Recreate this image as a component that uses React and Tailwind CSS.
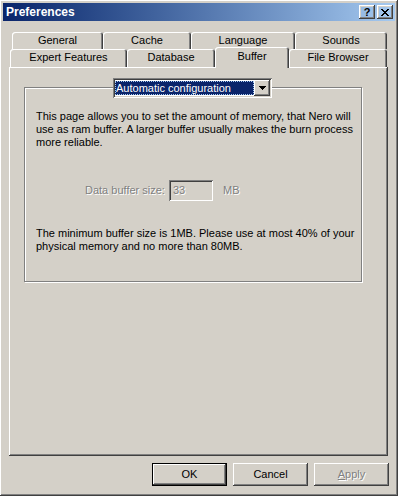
import React from 'react';

const raised = 'shadow-[inset_-1px_-1px_#404040,inset_1px_1px_#fff,inset_-2px_-2px_#808080,inset_2px_2px_#d4d0c8]';
const sunken = 'shadow-[inset_1px_1px_#808080,inset_-1px_-1px_#fff,inset_2px_2px_#404040,inset_-2px_-2px_#d4d0c8]';
const tabEdge = 'rounded-t-[3px] shadow-[inset_1px_1px_#fff,inset_-1px_0_#404040,inset_-2px_0_#808080]';
const disabled = 'text-[#808080] [text-shadow:1px_1px_0_#fff]';

const Tab = ({ label, w, active }) => (
  <div
    className={`${w} ${tabEdge} bg-[#d4d0c8] flex justify-center ${
      active ? 'relative z-10 -mt-[2px] h-[21px] pt-[3px]' : 'h-full pt-[2px]'
    }`}
  >
    {label}
  </div>
);

const Button = ({ children, isDefault, off }) => (
  <div
    className={`w-[75px] h-[23px] flex items-center justify-center bg-[#d4d0c8] ${
      isDefault
        ? 'border border-black shadow-[inset_-1px_-1px_#404040,inset_1px_1px_#fff,inset_-2px_-2px_#808080]'
        : raised
    } ${off ? disabled : 'text-black'}`}
  >
    {children}
  </div>
);

const CloseGlyph = () => (
  <svg width="8" height="7" viewBox="0 0 8 7" shapeRendering="crispEdges">
    <path d="M0 0h2v1H0zM6 0h2v1H6zM1 1h2v1H1zM5 1h2v1H5zM2 2h4v1H2zM3 3h2v1H3zM2 4h4v1H2zM1 5h2v1H1zM5 5h2v1H5zM0 6h2v1H0zM6 6h2v1H6z" fill="#000" />
  </svg>
);

export default function App() {
  return (
    <div className={`w-[398px] h-[496px] bg-[#d4d0c8] p-[3px] flex flex-col font-['Liberation_Sans',Arial,sans-serif] text-[11px] leading-[13px] text-black ${raised}`}>
      {/* title bar */}
      <div className="h-[18px] flex items-center bg-linear-to-r from-[#0a246a] to-[#a6caf0] pl-[3px] pr-[2px]">
        <span className="font-bold text-white text-[12px] flex-1">Preferences</span>
        <div className="flex gap-[2px]">
          <div className={`w-[16px] h-[14px] flex items-center justify-center font-bold text-[11px] leading-none ${raised}`}>?</div>
          <div className={`w-[16px] h-[14px] flex items-center justify-center ${raised}`}>
            <CloseGlyph />
          </div>
        </div>
      </div>

      {/* tabs */}
      <div className="mt-[11px] ml-[9px] flex h-[17px]">
        <Tab label="General" w="w-[91px]" />
        <Tab label="Cache" w="w-[88px]" />
        <Tab label="Language" w="w-[104px]" />
        <Tab label="Sounds" w="w-[92px]" />
      </div>
      <div className="ml-[7px] flex h-[18px]">
        <Tab label="Expert Features" w="w-[117px]" />
        <Tab label="Database" w="w-[88px]" />
        <Tab label="Buffer" w="w-[74px]" active />
        <Tab label="File Browser" w="w-[98px]" />
      </div>

      {/* page */}
      <div className={`ml-[6px] w-[379px] h-[389px] pt-[20px] pl-[15px] ${raised}`}>
        <div className="relative w-[338px] h-[195px] border border-[#808080] shadow-[1px_1px_0_#fff,inset_1px_1px_0_#fff] pt-[22px] pl-[11px]">
          <div className={`absolute left-[88px] -top-[10px] w-[159px] h-[20px] bg-white flex items-center pl-[2px] pr-[2px] ${sunken}`}>
            <div className="flex-1 h-[14px] bg-[#0a246a] text-white outline-1 outline-dotted outline-[#a6caf0] -outline-offset-1 pl-[1px] leading-[14px]">
              Automatic configuration
            </div>
            <div className={`w-[16px] h-[16px] flex items-center justify-center bg-[#d4d0c8] ${raised}`}>
              <svg width="7" height="4" viewBox="0 0 7 4" shapeRendering="crispEdges">
                <path d="M0 0h7v1H0zM1 1h5v1H1zM2 2h3v1H2zM3 3h1v1H3z" fill="#000" />
              </svg>
            </div>
          </div>

          <p className="w-[320px]">
            This page allows you to set the amount of memory, that Nero will use as ram buffer. A larger buffer usually makes the burn process more reliable.
          </p>

          <div className="mt-[31px] flex items-center">
            <span className={`ml-[49px] w-[84px] ${disabled}`}>Data buffer size:</span>
            <div className={`w-[44px] h-[21px] flex items-center pl-[4px] ${sunken} ${disabled}`}>33</div>
            <span className={`ml-[10px] ${disabled}`}>MB</span>
          </div>

          <p className="mt-[26px] w-[320px]">
            The minimum buffer size is 1MB. Please use at most 40% of your physical memory and no more than 80MB.
          </p>
        </div>
      </div>

      {/* buttons */}
      <div className="mt-[7px] flex justify-end gap-[6px] pr-[6px]">
        <Button isDefault>OK</Button>
        <Button>Cancel</Button>
        <Button off>
          <span><span className="underline">A</span>pply</span>
        </Button>
      </div>
    </div>
  );
}
